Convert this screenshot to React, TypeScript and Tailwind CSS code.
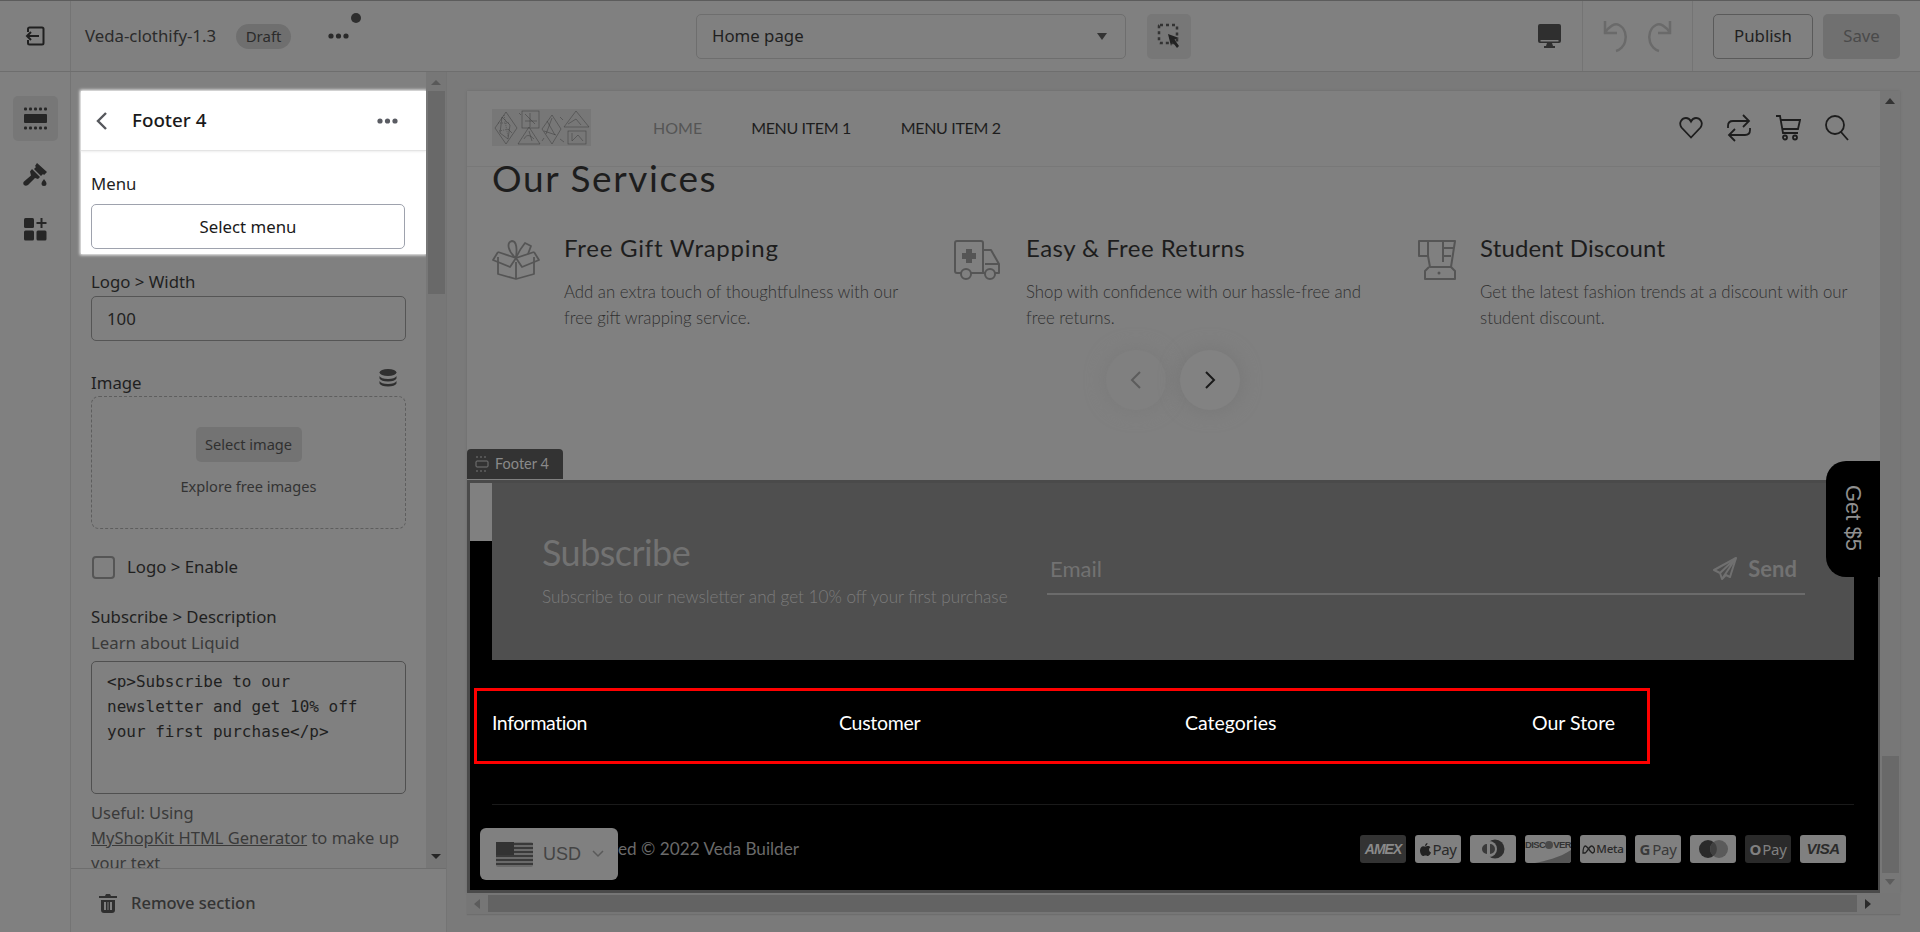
import React from "react";

const UI = "font-['Noto_Sans','Open_Sans',sans-serif]";
const SHOP = "font-['Lato','Noto_Sans',sans-serif]";

function ExitIcon() {
  return (
    <svg width="20" height="20" viewBox="0 0 20 20" fill="none" stroke="#1f1f1f" strokeWidth="2">
      <path d="M3 6V3a1.5 1.5 0 0 1 1.5-1.5H17A1.5 1.5 0 0 1 18.500 3v14a1.500 1.500 0 0 1-1.500 1.500H4.500A1.500 1.500 0 0 1 3 17v-3" />
      <path d="M14 10H2M6 6l-4 4 4 4" />
    </svg>
  );
}

function Dots({ color = "#2a2a2a" }: { color?: string }) {
  return (
    <svg width="21" height="6" viewBox="0 0 21 6" fill={color}>
      <circle cx="3" cy="3" r="2.600" />
      <circle cx="10.500" cy="3" r="2.600" />
      <circle cx="18" cy="3" r="2.600" />
    </svg>
  );
}

function SectionsIcon() {
  return (
    <svg width="23" height="23" viewBox="0 0 23 23" fill="#262626">
      <rect x="0" y="7" width="23" height="9" rx="1" />
      {[0, 5, 10, 15, 20].map((x) => (
        <g key={x}>
          <rect x={x} y="0.500" width="3" height="3" rx="1" />
          <rect x={x} y="19.500" width="3" height="3" rx="1" />
        </g>
      ))}
    </svg>
  );
}

function BrushIcon() {
  return (
    <svg width="26" height="26" viewBox="0 0 26 26" fill="#262626">
      <path d="M15 1l10 9-3 3-1-1-2 2-7-7 2-2-1-1z" />
      <path d="M10 7l8 8-2 2-3-1-7 7c-1.500 1-3 1-4 0s-1-2.500 0-3.500l7-6-1-4z" />
      <path d="M22 17c1 1.500 2.500 3 2.500 4.500a2.500 2.500 0 0 1-5 0c0-1.500 1.500-3 2.500-4.500z" />
    </svg>
  );
}

function AddIcon() {
  return (
    <svg width="23" height="23" viewBox="0 0 23 23" fill="#262626">
      <rect x="0" y="0" width="10" height="10" rx="1.500" />
      <rect x="0" y="12.500" width="10" height="10" rx="1.500" />
      <rect x="12.500" y="12.500" width="10" height="10" rx="1.500" />
      <path d="M16.500 0h2v4h4v2h-4v4h-2V6h-4V4h4z" />
    </svg>
  );
}

function Chevron({ left, color, size = 20, sw = 2 }: { left?: boolean; color: string; size?: number; sw?: number }) {
  return (
    <svg width={size} height={size} viewBox="0 0 20 20" fill="none" stroke={color} strokeWidth={sw}>
      <path d={left ? "M14 2L6 10l8 8" : "M6 2l8 8-8 8"} />
    </svg>
  );
}

function Logo() {
  return (
    <svg width="99" height="37" viewBox="0 0 99 37" className="bg-[#777777]" fill="none" stroke="#3c3c3c" strokeWidth="0.500">
      <path d="M3 19L14 3l11 16-11 16z" />
      <path d="M10 8l8 8-2 14-8-6z" />
      <path d="M6 14h12M7 22l10-2M12 6l4 22" strokeDasharray="1 1" />
      <rect x="30" y="2" width="17" height="17" />
      <path d="M33 5l10 10M33 12h12M38 4v14" />
      <path d="M26 35l11-17 11 17z" />
      <path d="M32 30c3-6 7-3 10 0M37 22l3 10" />
      <path d="M50 20L60 6l9 14-9 15z" />
      <path d="M55 12l8 14M52 22l12 4M60 9l-6 16" />
      <path d="M72 18L84 2l13 16z" />
      <path d="M76 15l8-5 5 6" />
      <rect x="76" y="22" width="18" height="13" />
      <path d="M80 24v8l6-6 5 6" />
      <path d="M16 20l4 4M68 8l3 3M68 30l4 3M27 4l2 2M50 32l2-3" />
    </svg>
  );
}

function Gift() {
  return (
    <svg width="48" height="40" viewBox="0 0 48 40" fill="none" stroke="#555" strokeWidth="1.800" strokeLinejoin="round">
      <path d="M6 17v17l18 5 18-5V17" />
      <path d="M24 22v17" />
      <path d="M6 12l18 6 18-6" />
      <path d="M6 12L1 20l17 7 6-9 6 9 17-7-5-8" />
      <path d="M24 18C16 12 14 2 20 1c5 0 5 9 4 17z" />
      <path d="M24 18c2-5 5-10 9-15l6 3-3 8" />
    </svg>
  );
}

function Truck() {
  return (
    <svg width="48" height="40" viewBox="0 0 48 40" fill="none" stroke="#555" strokeWidth="2" strokeLinejoin="round">
      <path d="M7 33H3a2 2 0 0 1-2-2V3a2 2 0 0 1 2-2h24a2 2 0 0 1 2 2v30H17" />
      <path d="M29 10h8l8 14v9h-4M29 33h2" />
      <path d="M31 24h14" />
      <circle cx="12" cy="34" r="5" />
      <circle cx="36" cy="34" r="5" />
      <path d="M12 9h6v4h4v6h-4v4h-6v-4H8v-6h4z" fill="#555" stroke="none" />
    </svg>
  );
}

function Blender() {
  return (
    <svg width="40" height="40" viewBox="0 0 40 40" fill="none" stroke="#555" strokeWidth="2" strokeLinejoin="round">
      <path d="M7 1h31l-4 26H13L11 16H2V1z" />
      <path d="M11 16V1M26 8h10M26 16h8M26 1v21" />
      <path d="M12 27L8 31v8h30v-8l-4-4" />
      <circle cx="22" cy="33" r="1.500" fill="#555" stroke="none" />
    </svg>
  );
}

function Service({
  icon,
  title,
  lines,
  iconW,
  track,
}: {
  icon: React.ReactNode;
  title: string;
  lines: string[];
  iconW: string;
  track: string;
}) {
  return (
    <div className="flex">
      <div className={`${iconW} pt-[10px]`}>{icon}</div>
      <div>
        <div className={`${SHOP} text-[24px] leading-[36px] text-[#1d1d1d] ${track}`}>{title}</div>
        <div className={`${SHOP} mt-[13px] text-[16.800px] leading-[26px] font-light whitespace-nowrap text-[#303030]`}>
          {lines.map((l) => (
            <div key={l}>{l}</div>
          ))}
        </div>
      </div>
    </div>
  );
}

function Card({ bg = "#808080", children }: { bg?: string; children: React.ReactNode }) {
  return (
    <div
      className="flex h-[28px] w-[46px] items-center justify-center overflow-hidden rounded-[3px] whitespace-nowrap"
      style={{ backgroundColor: bg }}
    >
      {children}
    </div>
  );
}

function Label({ children, className = "" }: { children: React.ReactNode; className?: string }) {
  return <div className={`text-[16.800px] leading-[24px] text-[#1f1f1f] ${className}`}>{children}</div>;
}

export default function App() {
  return (
    <div className={`${UI} flex h-[932px] w-[1920px] flex-col overflow-hidden bg-[#808080]`}>
      {/* top bar */}
      <header className="flex h-[72px] shrink-0 items-stretch border-t border-b border-t-[#5c5c5c] border-b-[#6e6e6e]">
        <div className="flex w-[71px] items-center justify-center border-r border-[#747474]">
          <ExitIcon />
        </div>
        <div className="flex w-[625px] items-center">
          <span className="ml-[14px] text-[16.800px] text-[#2b2b2b]">Veda-clothify-1.3</span>
          <span className="ml-[20px] flex h-[25px] w-[55px] items-center justify-center rounded-full bg-[#6f6f6f] text-[15px] text-[#2b2b2b]">
            Draft
          </span>
          <span className="relative ml-[37px] flex">
            <Dots />
            <span className="absolute top-[-20px] left-[23px] h-[10px] w-[10px] rounded-full bg-[#2e2e2e]" />
          </span>
        </div>
        <div className="flex items-center">
          <div className="flex h-[45px] w-[430px] items-center justify-between rounded-[5px] border border-[#6e6e6e] px-[15px] text-[16.800px] text-[#1f1f1f]">
            <span>Home page</span>
            <span className="mr-[3px] h-0 w-0 border-x-[5px] border-t-[7px] border-x-transparent border-t-[#333]" />
          </div>
          <div className="ml-[21px] flex h-[45px] w-[44px] items-center justify-center rounded-[5px] bg-[#777]">
            <svg width="24" height="26" viewBox="0 0 24 26" fill="none">
              <rect x="2" y="2" width="18" height="18" rx="1" stroke="#333" strokeWidth="2.500" strokeDasharray="3 3" />
              <path d="M11 11l11 4-4.500 1.500L22 23l-2 2-4.500-6-1.500 4z" fill="#222" />
            </svg>
          </div>
        </div>
        <div className="flex flex-1 items-center justify-end">
          <div className="mr-[21px]">
            <svg width="23" height="24" viewBox="0 0 23 24" fill="#2f2f2f">
              <path d="M2 0h19a2 2 0 0 1 2 2v15a2 2 0 0 1-2 2H2a2 2 0 0 1-2-2V2a2 2 0 0 1 2-2zM2.500 16v1.500h18V16z" fillRule="evenodd" />
              <path d="M9 19h5l1 3h2v2H6v-2h2z" />
            </svg>
          </div>
          <div className="flex h-full w-[111px] items-center justify-center gap-[19px] border-x border-[#747474]">
            <svg width="26" height="34" viewBox="0 0 26 34" fill="none" stroke="#6a6a6a" strokeWidth="2.500">
              <path d="M3 2v12h12" />
              <path d="M3 14C7 7 13 4 17 6c6 3 8 11 6 17-1 4-5 8-9 9" />
            </svg>
            <svg width="26" height="34" viewBox="0 0 26 34" fill="none" stroke="#6a6a6a" strokeWidth="2.500">
              <path d="M23 2v12H11" />
              <path d="M23 14C19 7 13 4 9 6 3 9 1 17 3 23c1 4 5 8 9 9" />
            </svg>
          </div>
          <div className="ml-[20px] flex h-[45px] w-[100px] items-center justify-center rounded-[5px] border border-[#5a5a5a] text-[16.800px] text-[#1f1f1f]">
            Publish
          </div>
          <div className="mr-[20px] ml-[10px] flex h-[45px] w-[77px] items-center justify-center rounded-[5px] bg-[#707070] text-[16.800px] text-[#4a4a4a]">
            Save
          </div>
        </div>
      </header>

      <div className="flex min-h-0 flex-1">
        {/* icon rail */}
        <nav className="flex w-[71px] shrink-0 flex-col items-center border-r border-[#747474] pt-[24px]">
          <div className="flex h-[45px] w-[45px] items-center justify-center rounded-[5px] bg-[#777]">
            <SectionsIcon />
          </div>
          <div className="mt-[21px]">
            <BrushIcon />
          </div>
          <div className="mt-[30px]">
            <AddIcon />
          </div>
        </nav>

        {/* settings panel */}
        <aside className="flex w-[376px] shrink-0 flex-col border-r border-[#747474]">
          <div className="flex h-[796px] min-h-0">
            <div className="w-[355px] overflow-hidden px-[20px] pt-[19px]">
              <div className="ml-[-10px] h-[163px] w-[345px] bg-white shadow-[0_0_3px_1px_#ffffff]">
                <div className="flex h-[60px] items-center border-b border-[#e4e4e4] pr-[28px] pl-[11px] shadow-[0_1px_2px_#eeeeee]">
                  <Chevron left color="#55575c" sw={2.400} />
                  <span className="ml-[20px] flex-1 text-[18.800px] font-medium text-[#1a1a1a]">Footer 4</span>
                  <Dots color="#5a5c63" />
                </div>
                <div className="pr-[21px] pl-[10px]">
                  <Label className="mt-[21px]">Menu</Label>
                  <div className="mt-[8px] flex h-[45px] items-center justify-center rounded-[5px] border border-[#9ea2ad] text-[16.800px] text-[#1a1a1a]">
                    Select menu
                  </div>
                </div>
              </div>
              <Label className="mt-[16px]">Logo &gt; Width</Label>
              <div className="mt-[2px] flex h-[45px] items-center rounded-[5px] border border-[#555] px-[15px] text-[16.800px] text-[#1f1f1f]">
                100
              </div>
              <div className="mt-[28px] flex items-end justify-between">
                <Label>Image</Label>
                <svg className="mr-[9px] mb-[8px]" width="18" height="18" viewBox="0 0 18 18" fill="#2f2f2f">
                  <ellipse cx="9" cy="3.500" rx="8.500" ry="3.500" />
                  <path d="M.5 7c1 2 4 3 8.500 3s7.500-1 8.500-3v2.500c-1 2-4 3-8.500 3s-7.500-1-8.500-3z" />
                  <path d="M.5 12c1 2 4 3 8.500 3s7.500-1 8.500-3v2.500c-1 2-4 3-8.500 3s-7.500-1-8.500-3z" />
                </svg>
              </div>
              <div className="mt-px flex h-[133px] flex-col items-center rounded-[8px] border border-dashed border-[#5e5e5e]">
                <div className="mt-[30px] flex h-[35px] w-[106px] items-center justify-center rounded-[5px] bg-[#737373] text-[14.600px] text-[#303030]">
                  Select image
                </div>
                <div className="mt-[13px] text-[14.600px] leading-[22px] text-[#333]">Explore free images</div>
              </div>
              <div className="mt-[26px] flex items-center">
                <span className="ml-[1px] h-[23px] w-[23px] rounded-[4px] border-2 border-[#555]" />
                <span className="ml-[12px] text-[16.800px] leading-[24px] text-[#1f1f1f]">Logo &gt; Enable</span>
              </div>
              <Label className="mt-[26px]">Subscribe &gt; Description</Label>
              <div className="mt-[1px] text-[16.800px] leading-[26px] text-[#3a3a3a]">Learn about Liquid</div>
              <div className="mt-[5px] h-[133px] rounded-[5px] border border-[#505050] px-[15px] pt-[7px] font-['DejaVu_Sans_Mono',monospace] text-[16px] leading-[25px] text-[#1f1f1f]">
                &lt;p&gt;Subscribe to our
                <br />
                newsletter and get 10% off
                <br />
                your first purchase&lt;/p&gt;
              </div>
              <div className="mt-[6px] text-[16.500px] leading-[25px] text-[#3a3a3a]">
                Useful: Using
                <br />
                <span className="underline">MyShopKit HTML Generator</span> to make up
                <br />
                your text
              </div>
            </div>
            {/* scrollbar */}
            <div className="flex w-[20px] flex-col items-center bg-[#777]">
              <span className="mt-[8px] h-0 w-0 border-x-[5px] border-b-[5px] border-x-transparent border-b-[#595959]" />
              <div className="mt-[6px] h-[203px] w-[17px] bg-[#696969]" />
              <div className="flex-1" />
              <span className="mb-[9px] h-0 w-0 border-x-[5px] border-t-[5px] border-x-transparent border-t-[#262626]" />
            </div>
          </div>
          <div className="flex h-[64px] items-center border-t border-[#6e6e6e] pt-[5px] pl-[28px] text-[16.500px] font-medium text-[#333]">
            <svg width="18" height="19" viewBox="0 0 18 19" fill="#2f2f2f">
              <path d="M7 0h4l1 2h6v2H0V2h6z" />
              <path d="M2 6h14v10a3 3 0 0 1-3 3H5a3 3 0 0 1-3-3zm3 2v8h2V8zm3.500 0v8h1V8zM11 8v8h2V8z" fillRule="evenodd" />
            </svg>
            <span className="ml-[14px]">Remove section</span>
          </div>
        </aside>

        {/* preview */}
        <main className="min-w-0 flex-1 bg-[#7a7a7a] pt-[19px] pr-[20px] pl-[20px]">
          <div className="flex w-[1433px] shadow-[0_0_2px_#6a6a6a]">
            <div className="relative h-[802px] w-[1413px] bg-[#808080]">
              {/* shop header */}
              <div className={`${SHOP} flex h-[76px] items-center border-b border-[#787878] pb-[2px] pl-[25px] text-[16px] text-[#1d1d1d]`}>
                <Logo />
                <span className="ml-[62px] text-[#555]">HOME</span>
                <span className="ml-[49px] tracking-[-.35px]">MENU ITEM 1</span>
                <span className="ml-[50px] tracking-[-.35px]">MENU ITEM 2</span>
                <div className="mr-[31px] ml-auto flex items-center gap-[24px]">
                  <svg width="24" height="22" viewBox="0 0 24 22" fill="none" stroke="#1d1d1d" strokeWidth="1.800">
                    <path d="M12 20.500L2.500 10.500C-1 5 3.500 1 7 1c2.500 0 4 1.500 5 3.500C13 2.500 14.500 1 17 1c3.500 0 8 4 4.500 9.500z" />
                  </svg>
                  <svg width="24" height="30" viewBox="0 0 24 30" fill="none" stroke="#1d1d1d" strokeWidth="1.800">
                    <path d="M1 15v-2c0-3 2-5 5-5h16M16 2l6 6-6 6" />
                    <path d="M23 15v2c0 3-2 5-5 5H2M8 16l-6 6 6 6" />
                  </svg>
                  <svg width="26" height="26" viewBox="0 0 26 26" fill="none" stroke="#1d1d1d" strokeWidth="1.800">
                    <path d="M1 1h4l3 17h15" />
                    <path d="M5.500 5H25l-2 9H7" />
                    <circle cx="10" cy="22.500" r="2" />
                    <circle cx="20" cy="22.500" r="2" />
                  </svg>
                  <svg width="24" height="26" viewBox="0 0 24 26" fill="none" stroke="#1d1d1d" strokeWidth="1.800">
                    <circle cx="10" cy="10" r="9" />
                    <path d="M16 17l7 8" />
                  </svg>
                </div>
              </div>

              {/* services */}
              <div className="h-[313px] pl-[25px]">
                <div className={`${SHOP} h-[27px] text-[37px] leading-[22px] tracking-[1.600px] text-[#1d1d1d]`}>Our Services</div>
                <div className="mt-[36px] flex h-[90px]">
                  <div className="w-[462px]">
                    <Service
                      icon={<Gift />}
                      iconW="w-[72px]"
                      track="tracking-[.75px]"
                      title="Free Gift Wrapping"
                      lines={["Add an extra touch of thoughtfulness with our", "free gift wrapping service."]}
                    />
                  </div>
                  <div className="w-[463px]">
                    <Service
                      icon={<Truck />}
                      iconW="w-[72px]"
                      track="tracking-[.45px]"
                      title="Easy & Free Returns"
                      lines={["Shop with confidence with our hassle-free and", "free returns."]}
                    />
                  </div>
                  <Service
                    icon={<Blender />}
                    iconW="w-[63px]"
                    track="tracking-[.15px]"
                    title="Student Discount"
                    lines={["Get the latest fashion trends at a discount with our", "student discount."]}
                  />
                </div>
                <div className="mt-[30px] ml-[614px] flex gap-[14px]">
                  <div className="flex h-[60px] w-[60px] items-center justify-center rounded-full shadow-[0_0_20px_#7a7a7a]">
                    <Chevron left color="#5c5c5c" />
                  </div>
                  <div className="flex h-[60px] w-[60px] items-center justify-center rounded-full bg-[#828282] shadow-[0_0_20px_#767676]">
                    <Chevron color="#1a1a1a" />
                  </div>
                </div>
              </div>

              {/* footer */}
              <div className={`${SHOP} relative h-[413px] border-[3px] border-r-2 border-[#4a4a4a] bg-black`}>
                <div className="absolute top-[-34px] left-[-3px] flex h-[30px] w-[96px] items-center rounded-t-[4px] bg-[#333] pl-[8px] text-[14.500px] text-[#8a8a8a]">
                  <svg width="14" height="16" viewBox="0 0 14 16" fill="none" stroke="#777" strokeWidth="1">
                    <path d="M1 1h12M1 15h12" strokeDasharray="2 2" />
                    <rect x="1" y="5" width="12" height="6" rx="1" />
                  </svg>
                  <span className="ml-[6px]">Footer 4</span>
                </div>

                <div className="flex h-[177px]">
                  <div className="w-[22px]">
                    <div className="h-[58px] bg-[#808080]" />
                  </div>
                  <div className="flex w-[1362px] bg-[#4f4f4f] pt-[47px] pl-[50px]">
                    <div className="w-[505px]">
                      <div className="text-[36px] leading-[44px] tracking-[-.55px] text-[#727272]">Subscribe</div>
                      <div className="mt-[11px] text-[17.100px] leading-[24px] font-light text-[#7c7c7c]">
                        Subscribe to our newsletter and get 10% off your first purchase
                      </div>
                    </div>
                    <div className="mt-[16px] flex h-[49px] w-[758px] items-center justify-between border-b-2 border-[#6b6b6b] pr-[8px] pb-[2px] pl-[3px] text-[22px] text-[#727272]">
                      <span>Email</span>
                      <span className="flex items-center gap-[11px] font-bold">
                        <svg width="24" height="24" viewBox="0 0 24 24" fill="none" stroke="#707070" strokeWidth="2" strokeLinejoin="round">
                          <path d="M23 1L1 13l6 3 2 6 4-4 4 2z" />
                          <path d="M23 1L7 16M23 1L9 22" />
                        </svg>
                        Send
                      </span>
                    </div>
                  </div>
                </div>

                <div className="mt-[51px] flex pl-[22px] text-[19.500px] leading-[24px] font-normal text-white">
                  <div className="w-[347px] tracking-[-.45px]">Information</div>
                  <div className="w-[346px] tracking-[-.3px]">Customer</div>
                  <div className="w-[347px]">Categories</div>
                  <div>Our Store</div>
                </div>

                <div className="mt-[69px] ml-[22px] h-px w-[1362px] bg-[#1a1a1a]" />

                <div className="mt-[30px] ml-[22px] flex w-[1362px] items-center justify-between pr-[8px]">
                  <span className="text-[17.200px] leading-[28px] text-[#6a6a6a]">All Rights Reserved © 2022 Veda Builder</span>
                  <div className="flex gap-[9px] text-[#2a2a2a]">
                    <Card bg="#333333">
                      <span className="font-['Liberation_Sans',sans-serif] text-[14px] font-bold tracking-[-1px] text-[#8a8a8a] italic">AMEX</span>
                    </Card>
                    <Card>
                      <svg width="11" height="13" viewBox="0 0 11 13" fill="#222" className="mr-[2px]">
                        <path d="M7.500 0C7.600 1.500 6.500 3 5 3 5 1.500 6 .2 7.500 0zM5.300 3.500c.8 0 1.500-.6 2.600-.6 1 0 2 .5 2.600 1.400-2.200 1.300-1.800 4.400.5 5.300-.6 1.500-1.700 3.400-3 3.400-1 0-1.300-.6-2.500-.6s-1.600.6-2.500.6C1.500 12.900 0 10 0 7.500 0 5 1.600 3.200 3.200 3.200c.9 0 1.600.3 2.100.3z" />
                      </svg>
                      <span className="font-['Noto_Sans',sans-serif] text-[15px] tracking-[-.4px]">Pay</span>
                    </Card>
                    <Card>
                      <svg width="26" height="20" viewBox="0 0 26 20">
                        <circle cx="15" cy="10" r="9.500" fill="#2e2e2e" />
                        <circle cx="9" cy="10" r="8" fill="#808080" />
                        <path d="M7 5a5 5 0 0 0 0 10zM10 5a5 5 0 0 1 0 10z" fill="#3a3a3a" />
                      </svg>
                    </Card>
                    <div className="relative h-[28px] w-[46px] overflow-hidden rounded-[3px] bg-[#808080] pt-[4px] text-center font-['Liberation_Sans',sans-serif] text-[9.500px] leading-[11px] font-bold tracking-[-.6px] whitespace-nowrap text-[#333]">
                      DISC<span className="inline-block h-[8px] w-[8px] rounded-full bg-[#4a4a4a] align-middle" />VER
                      <svg className="absolute bottom-0 left-0" width="46" height="13" viewBox="0 0 46 13">
                        <path d="M46 0C34 8 20 11 10 13h36z" fill="#555" />
                      </svg>
                    </div>
                    <Card>
                      <svg width="13" height="9" viewBox="0 0 13 9" fill="none" stroke="#222" strokeWidth="1.300" className="mr-[1px]">
                        <path d="M1 8c0-4 1-7 2.500-7S9 8 10.500 8 12.500 6 12.500 5 11.500 1 9.500 1 4.500 8 3 8 1 8 1 8z" />
                      </svg>
                      <span className="font-['Noto_Sans',sans-serif] text-[11.500px] font-medium tracking-[-.2px]">Meta</span>
                    </Card>
                    <Card>
                      <span className="font-['Noto_Sans',sans-serif] text-[15px] font-bold text-[#3a3a3a]">G</span>
                      <span className="ml-[2px] font-['Noto_Sans',sans-serif] text-[15px] tracking-[-.3px] text-[#3a3a3a]">Pay</span>
                    </Card>
                    <Card>
                      <svg width="29" height="18" viewBox="0 0 29 18">
                        <circle cx="9" cy="9" r="9" fill="#2a2a2a" />
                        <circle cx="20" cy="9" r="9" fill="#5a5a5a" />
                        <path d="M14.500 2a9 9 0 0 1 0 14 9 9 0 0 1 0-14z" fill="#404040" />
                      </svg>
                    </Card>
                    <Card bg="#2a2a2a">
                      <span className="font-['Noto_Sans',sans-serif] text-[15px] font-bold text-[#808080]">O</span>
                      <span className="ml-[1px] font-['Noto_Sans',sans-serif] text-[15px] tracking-[-.3px] text-[#808080]">Pay</span>
                    </Card>
                    <Card>
                      <span className="font-['Liberation_Sans',sans-serif] text-[15px] font-bold tracking-[-.5px] text-[#2a2a2a] italic">VISA</span>
                    </Card>
                  </div>
                </div>

                {/* annotation */}
                <div className="absolute top-[205px] left-[4px] h-[76px] w-[1176px] border-[3px] border-[#ff0000]" />

                {/* currency */}
                <div className="absolute top-[345px] left-[10px] flex h-[52px] w-[138px] items-center rounded-[6px] bg-[#808080] pl-[16px]">
                  <svg width="37" height="25" viewBox="0 0 37 25">
                    <rect width="37" height="25" rx="2" fill="#6a6a6a" />
                    {[0, 4, 8, 12, 16, 20].map((y) => (
                      <rect key={y} y={y + 1} width="37" height="2" fill="#3a3a3a" />
                    ))}
                    <rect width="18" height="13" fill="#333" />
                  </svg>
                  <span className="ml-[10px] font-['Liberation_Sans',sans-serif] text-[18px] text-[#444]">USD</span>
                  <svg className="ml-[11px]" width="12" height="8" viewBox="0 0 12 8" fill="none" stroke="#5a5a5a" strokeWidth="1.500">
                    <path d="M1 1l5 5 5-5" />
                  </svg>
                </div>
              </div>

              {/* floating tab */}
              <div className="absolute top-[370px] right-0 flex h-[116px] w-[54px] items-center justify-start rounded-l-[20px] bg-black pt-[24px] font-['Liberation_Sans',sans-serif] text-[22px] leading-[24px] text-[#8f8f8f] [writing-mode:vertical-rl]">
                Get $5
              </div>
            </div>

            {/* page vertical scrollbar */}
            <div className="flex w-[20px] flex-col items-center bg-[#777]">
              <span className="mt-[7px] h-0 w-0 border-x-[5px] border-b-[6px] border-x-transparent border-b-[#333]" />
              <div className="flex-1" />
              <div className="h-[117px] w-[17px] bg-[#696969]" />
              <span className="mt-[6px] mb-[8px] h-0 w-0 border-x-[5px] border-t-[6px] border-x-transparent border-t-[#5c5c5c]" />
            </div>
          </div>

          {/* horizontal scrollbar */}
          <div className="flex h-[21px] w-[1433px] items-center bg-[#767676] shadow-[0_1px_1px_#6e6e6e]">
            <span className="ml-[7px] h-0 w-0 border-y-[5px] border-r-[6px] border-y-transparent border-r-[#5c5c5c]" />
            <div className="ml-[8px] h-[17px] w-[1369px] bg-[#636363]" />
            <span className="ml-[8px] h-0 w-0 border-y-[5px] border-l-[6px] border-y-transparent border-l-[#2a2a2a]" />
          </div>
        </main>
      </div>
    </div>
  );
}
